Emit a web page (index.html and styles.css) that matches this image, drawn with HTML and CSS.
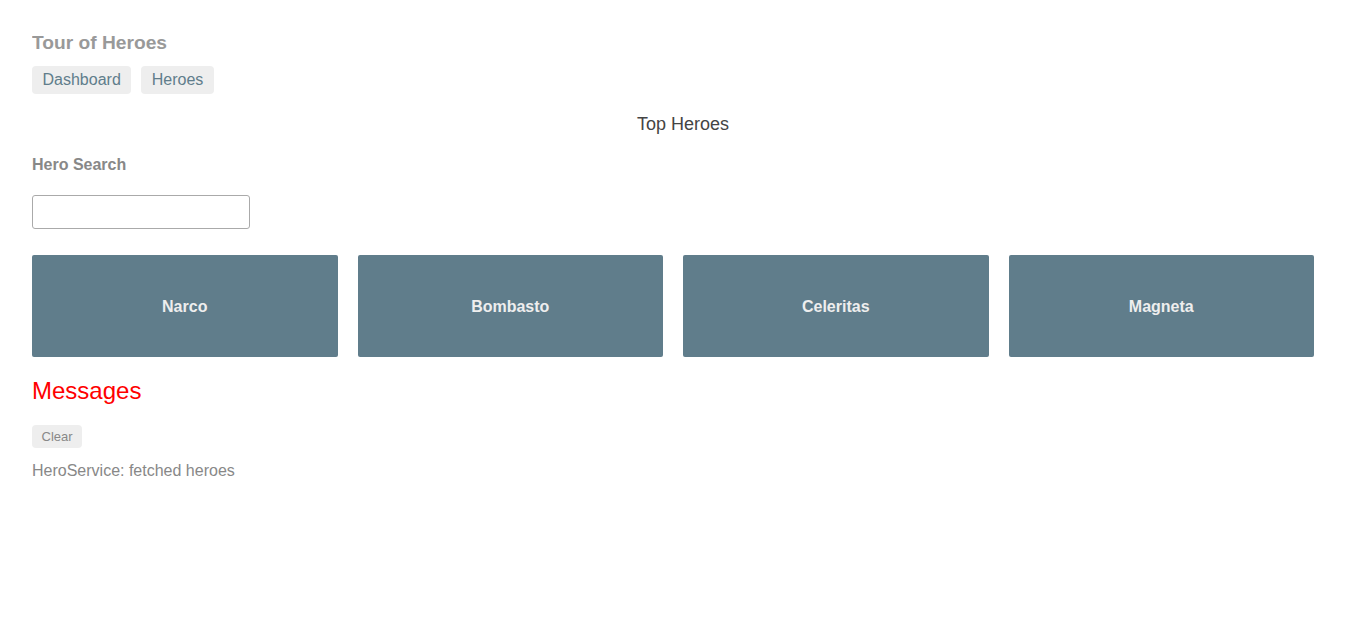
FILE: index.html
```html
<!DOCTYPE html>
<html lang="en">
<head>
<meta charset="utf-8">
<title>Tour of Heroes</title>
<link rel="stylesheet" href="styles.css">
</head>
<body>
  <h1 class="app-title">Tour of Heroes</h1>
  <nav class="nav">
    <a class="nav-link" href="#">Dashboard</a>
    <a class="nav-link" href="#">Heroes</a>
  </nav>

  <h2 class="section-title">Top Heroes</h2>

  <div class="search">
    <h4 class="search-title">Hero Search</h4>
    <input class="search-box" type="text">
  </div>

  <div class="grid">
    <a class="tile" href="#"><h4 class="tile-name">Narco</h4></a>
    <a class="tile" href="#"><h4 class="tile-name">Bombasto</h4></a>
    <a class="tile" href="#"><h4 class="tile-name">Celeritas</h4></a>
    <a class="tile" href="#"><h4 class="tile-name">Magneta</h4></a>
  </div>

  <div class="messages">
    <h2 class="messages-title">Messages</h2>
    <button class="clear-btn" type="button">Clear</button>
    <div class="message">HeroService: fetched heroes</div>
  </div>
</body>
</html>
```

FILE: styles.css
```css
* { box-sizing: border-box; }

body {
  margin: 32px;
  font-family: "Liberation Sans", Arial, Helvetica, sans-serif;
  color: #333;
  background: #fff;
}

.app-title {
  margin: 0 0 12px;
  font-size: 19.2px;
  line-height: 22px;
  font-weight: bold;
  color: #999;
}

.nav {
  display: flex;
  gap: 10px;
}

.nav-link {
  display: block;
  padding: 5px 10.5px;
  font-size: 16px;
  line-height: 18px;
  color: #607d8b;
  background: #eee;
  border-radius: 4px;
  text-decoration: none;
}

.section-title {
  margin: 20px 0 0;
  text-align: center;
  font-size: 18px;
  line-height: 20px;
  font-weight: normal;
  color: #444;
}

.search {
  margin-top: 22px;
}

.search-title {
  margin: 0;
  font-size: 16px;
  line-height: 18px;
  font-weight: bold;
  color: #888;
}

.search-box {
  display: block;
  margin-top: 21px;
  width: 218px;
  height: 34px;
  padding: 0 8px;
  border: 1px solid #aaa;
  border-radius: 3px;
  font-family: "Liberation Sans", Arial, sans-serif;
  font-size: 16px;
}

.grid {
  margin-top: 26px;
  padding-right: 20px;
  display: grid;
  grid-template-columns: repeat(4, 1fr);
  gap: 20px;
}

.tile {
  display: flex;
  align-items: center;
  justify-content: center;
  height: 102px;
  padding-top: 2px;
  background: #607d8b;
  border-radius: 2px;
  color: #eee;
  text-decoration: none;
}

.tile-name {
  margin: 0;
  font-size: 16px;
  line-height: 18px;
  font-weight: bold;
}

.messages {
  margin-top: 20px;
}

.messages-title {
  margin: 0;
  font-size: 24px;
  line-height: 28px;
  font-weight: normal;
  color: red;
}

.clear-btn {
  display: block;
  margin-top: 20px;
  padding: 4px 9.5px;
  border: none;
  border-radius: 4px;
  background: #eee;
  color: #888;
  font-family: "Liberation Sans", Arial, sans-serif;
  font-size: 13px;
  line-height: 15px;
}

.message {
  margin-top: 14px;
  font-size: 16px;
  line-height: 18px;
  color: #888;
}
```
